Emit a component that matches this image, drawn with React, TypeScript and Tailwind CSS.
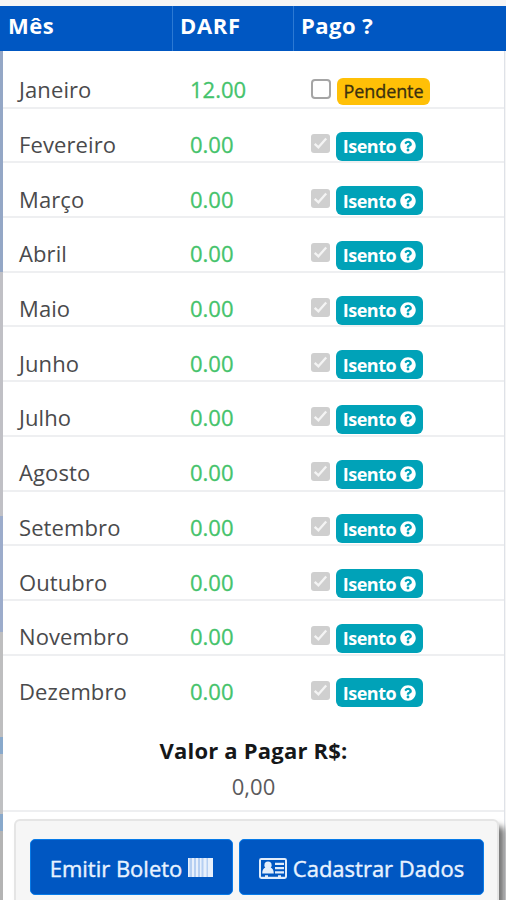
import { FaQuestionCircle } from "react-icons/fa";

const months = [
  { name: "Janeiro", darf: "12.00", exempt: false },
  { name: "Fevereiro", darf: "0.00", exempt: true },
  { name: "Março", darf: "0.00", exempt: true },
  { name: "Abril", darf: "0.00", exempt: true },
  { name: "Maio", darf: "0.00", exempt: true },
  { name: "Junho", darf: "0.00", exempt: true },
  { name: "Julho", darf: "0.00", exempt: true },
  { name: "Agosto", darf: "0.00", exempt: true },
  { name: "Setembro", darf: "0.00", exempt: true },
  { name: "Outubro", darf: "0.00", exempt: true },
  { name: "Novembro", darf: "0.00", exempt: true },
  { name: "Dezembro", darf: "0.00", exempt: true },
];

const Checkbox = ({ checked }: { checked: boolean }) => (
  <span
    className={
      checked
        ? "mb-[5px] flex size-[19px] shrink-0 items-center justify-center rounded-[3px] bg-[#cfcfcf]"
        : "mb-[5px] size-5 shrink-0 rounded-[4px] border-2 border-[#a5a5a5] bg-white"
    }
  >
    {checked && (
      <svg viewBox="0 0 19 19" className="size-[19px]" fill="none" stroke="#f4f4f4" strokeWidth="2.3">
        <path d="M3.7 9.8 7.4 13.3 15.2 4.5" />
      </svg>
    )}
  </span>
);

const BarcodeIcon = () => (
  <svg viewBox="0 0 25 19" className="mb-0.5 h-[19px] w-[25px]">
    <rect width="25" height="19" fill="#b5cff2" />
    <path
      d="M0 0h1.5v19H0zM4 0h2v19H4zM8 0h2v19H8zM12 0h1.5v19H12zM15.5 0h3v19h-3zM20 0h5v19h-5z"
      fill="#e7f0fc"
    />
  </svg>
);

const CardIcon = () => (
  <svg viewBox="0 0 28 21" className="h-[21px] w-7" fill="#e2edfb">
    <path
      fillRule="evenodd"
      d="M2.4 0h23.2A2.4 2.4 0 0 1 28 2.4v16.2a2.4 2.4 0 0 1-2.4 2.4H2.4A2.4 2.4 0 0 1 0 18.6V2.4A2.4 2.4 0 0 1 2.4 0zM2 2v16.8h4v-1.5h3v1.5h10v-1.5h3v1.5h4V2z"
    />
    <circle cx="9" cy="7.2" r="3.6" />
    <path d="M3.2 15.5c0-3.8 1.6-5.7 3.6-5.7h4.4c2 0 3.6 1.9 3.6 5.7zM16 4.8h9v2.2h-9zM16 9h9v2.2h-9zM16 13.2h9v2.2h-9z" />
  </svg>
);

const App = () => {
  return (
    <div className="flex h-[900px] w-[506px] flex-col overflow-hidden bg-[#f5f5f5] pt-1.5 font-['Open_Sans','Noto_Sans',sans-serif]">
      <div className="flex h-[45px] shrink-0 bg-[#0057c2] text-[22px] leading-[39px] font-bold text-white">
        <div className="w-[173px] border-r border-[#2c79d3] pl-2 tracking-[0.5px]">Mês</div>
        <div className="w-[121px] border-r border-[#2c79d3] pl-[7px] tracking-[0.7px]">DARF</div>
        <div className="pl-[7px] tracking-[0.5px]">Pago ?</div>
      </div>

      <div className="flex flex-1">
        <div className="flex w-[3px] shrink-0 flex-col">
          <div className="h-[221px] bg-[#94a7c6]" />
          <div className="h-[244px] bg-[#c0c0c5]" />
          <div className="h-[116px] bg-[#9caccb]" />
          <div className="h-[105px] bg-[#bebebf]" />
          <div className="h-[17px] bg-[#89a9cb]" />
          <div className="h-[60px] bg-[#bfc0c2]" />
          <div className="h-[17px] bg-[#89a9cb]" />
          <div className="flex-1 bg-[#b4b4b4]" />
        </div>

        <div className="flex w-[502px] flex-col border-r border-[#dfe2e8] bg-white pt-[3px]">
          {/* Meses */}
          <div>
            {months.map((month) => (
              <div
                key={month.name}
                className="flex h-[54.7px] items-center border-b-2 border-[#eeeff1] pt-[18px] text-[22px] leading-[30px] last:border-transparent"
              >
                <div className="w-[187px] pl-4 tracking-[0.1px] text-[#4a4a4c]">{month.name}</div>
                <div className="w-[121px] text-[#45c36c] [-webkit-text-stroke:0.3px]">{month.darf}</div>
                <div className="flex items-center gap-1.5 pt-1">
                  <Checkbox checked={month.exempt} />
                  {month.exempt ? (
                    <span className="flex h-[29px] w-[87px] items-center justify-center gap-1 rounded-[6px] bg-[#00a2b8] text-[18px] font-bold tracking-[-0.5px] text-white">
                      Isento <FaQuestionCircle className="size-4" />
                    </span>
                  ) : (
                    <span className="flex h-[27px] w-[93px] items-center justify-center rounded-[6px] bg-[#ffc007] text-[18px] tracking-[-0.1px] text-[#3b300f] [-webkit-text-stroke:0.3px]">
                      Pendente
                    </span>
                  )}
                </div>
              </div>
            ))}
          </div>

          {/* Total */}
          <div className="flex h-[102px] shrink-0 flex-col items-center border-b-2 border-[#eeeff1] pt-[22px] text-[22px] leading-9">
            <strong className="tracking-[0.2px] text-[#151719]">Valor a Pagar R$:</strong>
            <span className="text-[#5a5a5c]">0,00</span>
          </div>

          <div className="mt-[7px] ml-[11px] flex h-[100px] w-[485px] shrink-0 gap-1.5 rounded-t-[6px] border-2 border-[#e5e5e5] bg-[#f6f6f6] px-[14px] pt-[18px] text-[22px] text-[#e8f2ff] shadow-[6px_7px_6px_#777] [-webkit-text-stroke:0.4px]">
            <button className="flex h-14 w-[203px] shrink-0 items-center justify-center gap-1.5 rounded-[5px] border border-[#087be8] bg-[#0057c2] pt-0.5">
              Emitir Boleto <BarcodeIcon />
            </button>
            <button className="flex h-14 w-[245px] shrink-0 items-center justify-center gap-1.5 rounded-[5px] border border-[#087be8] bg-[#0057c2] pt-0.5">
              <CardIcon /> Cadastrar Dados
            </button>
          </div>
        </div>
      </div>
    </div>
  );
};

export default App;
